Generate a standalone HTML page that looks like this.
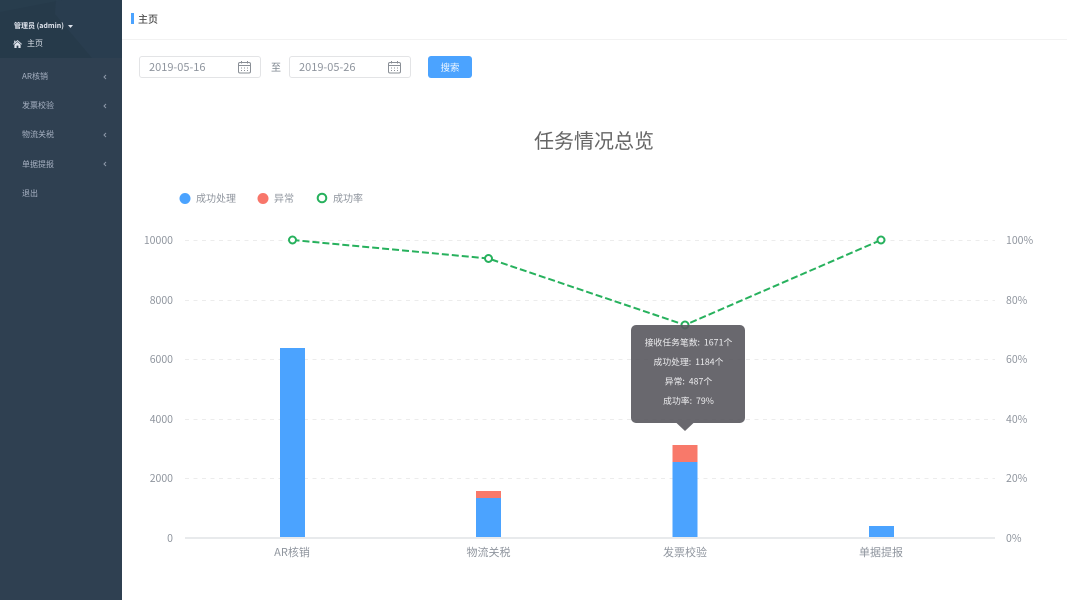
<!DOCTYPE html>
<html lang="zh-CN">
<head>
<meta charset="utf-8">
<title>主页</title>
<style>
html,body{margin:0;padding:0;width:1067px;height:600px;overflow:hidden;background:#fff;font-family:"Noto Sans CJK SC","Liberation Sans",sans-serif;}
.abs{position:absolute;white-space:nowrap;}
#side{position:absolute;left:0;top:0;width:122px;height:600px;background:#2f4051;overflow:hidden;}
#head{position:absolute;left:0;top:0;width:122px;height:58px;background:#263a4a;}
.mi{position:absolute;left:22px;font-size:8px;line-height:12px;color:#a7b1c2;white-space:nowrap;}
.ar{position:absolute;left:102px;}
.date{position:absolute;top:56px;height:20px;width:120px;border:1px solid #e3e4e6;border-radius:3px;background:#fff;font-size:11px;line-height:20px;color:#8f959e;text-indent:9px;}
</style>
</head>
<body>
<div id="side">
  <div id="head"></div>
  <svg class="abs" style="left:0;top:0" width="122" height="58"><path d="M56 0H122V58H92L55 14Z" fill="#2a3f50" opacity=".8"/><path d="M0 0H62L0 12Z" fill="#2a3f50" opacity=".6"/></svg>
  <div class="abs" style="left:14px;top:20px;font-size:7px;line-height:12px;font-weight:bold;color:#dfe4ed">管理员 (admin)</div>
  <svg class="abs" style="left:68px;top:25px" width="5" height="3"><path d="M0 0H5L2.500 3Z" fill="#dfe4ed"/></svg>
  <svg class="abs" style="left:13px;top:40px" width="9" height="8" viewBox="0 0 9 8"><path d="M4.500 0L9 4 8.400 4.600 4.500 1.300 .6 4.600 0 4 1.200 3V.6H2.400V1.900ZM1.400 4.600L4.500 2 7.600 4.600V8H5.400V5.600H3.600V8H1.400Z" fill="#dfe4ed"/></svg>
  <div class="abs" style="left:27px;top:38px;font-size:8px;line-height:12px;color:#d5dbe4">主页</div>
  <div class="mi" style="top:71px">AR核销</div>
  <div class="mi" style="top:100px">发票校验</div>
  <div class="mi" style="top:129px">物流关税</div>
  <div class="mi" style="top:159px">单据提报</div>
  <div class="mi" style="top:188px">退出</div>
  <svg class="ar" style="top:74px" width="6" height="6"><path d="M4 1L2 3 4 5" fill="none" stroke="#8e99a8"/></svg>
  <svg class="ar" style="top:103px" width="6" height="6"><path d="M4 1L2 3 4 5" fill="none" stroke="#8e99a8"/></svg>
  <svg class="ar" style="top:132px" width="6" height="6"><path d="M4 1L2 3 4 5" fill="none" stroke="#8e99a8"/></svg>
  <svg class="ar" style="top:161px" width="6" height="6"><path d="M4 1L2 3 4 5" fill="none" stroke="#8e99a8"/></svg>
</div>

<div class="abs" style="left:130.500px;top:13px;width:3px;height:11px;background:#4ba3ff"></div>
<div class="abs" style="left:138px;top:12px;font-size:10px;line-height:14px;font-weight:500;color:#4d4d4d">主页</div>
<div class="abs" style="left:122px;top:39px;width:945px;height:1px;background:#f2f2f2"></div>

<div class="date" style="left:139px">2019-05-16</div>
<div class="date" style="left:289px">2019-05-26</div>
<svg class="abs" style="left:237px;top:60px" width="15" height="15" viewBox="0 0 15 15"><g fill="none" stroke="#8a8f96"><rect x="1.500" y="2.500" width="12" height="10.500" rx="1.500"/><path d="M1.500 5.500H13.500M4.500 1V3.500M10.500 1V3.500"/><path d="M4 8H5M7 8H8M10 8H11M4 10.500H5M7 10.500H8M10 10.500H11"/></g></svg>
<svg class="abs" style="left:387px;top:60px" width="15" height="15" viewBox="0 0 15 15"><g fill="none" stroke="#8a8f96"><rect x="1.500" y="2.500" width="12" height="10.500" rx="1.500"/><path d="M1.500 5.500H13.500M4.500 1V3.500M10.500 1V3.500"/><path d="M4 8H5M7 8H8M10 8H11M4 10.500H5M7 10.500H8M10 10.500H11"/></g></svg>
<div class="abs" style="left:271px;top:60px;font-size:10px;line-height:14px;color:#7f8790">至</div>
<div class="abs" style="left:428px;top:56px;width:44px;height:22px;background:#4ba3ff;border-radius:3px;color:#eaf4ff;font-size:9.500px;line-height:23px;text-align:center">搜索</div>

<svg class="abs" style="left:0;top:0" width="1067" height="600" viewBox="0 0 1067 600" font-family="'Noto Sans CJK SC','Liberation Sans',sans-serif">
  <text x="594" y="148" text-anchor="middle" font-size="20" fill="#666">任务情况总览</text>

  <circle cx="185" cy="198.500" r="5.500" fill="#4ba3ff"/>
  <text x="196" y="202" font-size="10" fill="#8f959e">成功处理</text>
  <circle cx="263" cy="198.500" r="5.500" fill="#f8766a"/>
  <text x="274" y="202" font-size="10" fill="#8f959e">异常</text>
  <circle cx="322" cy="198" r="4.300" fill="#fff" stroke="#27b15d" stroke-width="2"/>
  <text x="333" y="202" font-size="10" fill="#8f959e">成功率</text>

  <g stroke="#ececec" stroke-width="1" stroke-dasharray="4 4.500">
    <path d="M185 240.500H995M185 300.500H995M185 359.500H995M185 419.500H995M185 478.500H995"/>
  </g>
  <path d="M185 538H995" stroke="#e8eaec" stroke-width="2"/>

  <g font-size="10.500" fill="#8f959e" text-anchor="end">
    <text x="173" y="244">10000</text>
    <text x="173" y="304">8000</text>
    <text x="173" y="363">6000</text>
    <text x="173" y="423">4000</text>
    <text x="173" y="482">2000</text>
    <text x="173" y="542">0</text>
  </g>
  <g font-size="10.500" fill="#8f959e">
    <text x="1006" y="244">100%</text>
    <text x="1006" y="304">80%</text>
    <text x="1006" y="363">60%</text>
    <text x="1006" y="423">40%</text>
    <text x="1006" y="482">20%</text>
    <text x="1006" y="542">0%</text>
  </g>
  <g font-size="11" fill="#8f959e" text-anchor="middle">
    <text x="292" y="556">AR核销</text>
    <text x="488.500" y="556">物流关税</text>
    <text x="685" y="556">发票校验</text>
    <text x="881" y="556">单据提报</text>
  </g>

  <rect x="280" y="348" width="25" height="189" fill="#4ba3ff"/>
  <rect x="476" y="498" width="25" height="39" fill="#4ba3ff"/>
  <rect x="476" y="491" width="25" height="7" fill="#f8796a"/>
  <rect x="672.500" y="462" width="25" height="75" fill="#4ba3ff"/>
  <rect x="672.500" y="445" width="25" height="17" fill="#f8796a"/>
  <rect x="869" y="526" width="25" height="11" fill="#4ba3ff"/>

  <path d="M292.500 240L488.500 258.500L685 325L881 240" fill="none" stroke="#27b15d" stroke-width="2" stroke-dasharray="7 3"/>
  <g fill="#fff" stroke="#27b15d" stroke-width="2">
    <circle cx="292.500" cy="240" r="3.500"/>
    <circle cx="488.500" cy="258.500" r="3.500"/>
    <circle cx="881" cy="240" r="3.500"/>
    <circle cx="685" cy="325" r="3.500"/>
  </g>

  <path d="M636 325H740a5 5 0 0 1 5 5V418a5 5 0 0 1 -5 5H693.500L685 431L676.500 423H636a5 5 0 0 1 -5 -5V330a5 5 0 0 1 5 -5Z" fill="#59585e" fill-opacity=".9"/>
  <g font-size="8.800" fill="#ececee" text-anchor="middle">
    <text x="688.500" y="345.500">接收任务笔数:&#160;&#160;1671个</text>
    <text x="688.500" y="365">成功处理:&#160;&#160;1184个</text>
    <text x="688.500" y="384.500">异常:&#160;&#160;487个</text>
    <text x="688.500" y="404">成功率:&#160;&#160;79%</text>
  </g>
</svg>
</body>
</html>
